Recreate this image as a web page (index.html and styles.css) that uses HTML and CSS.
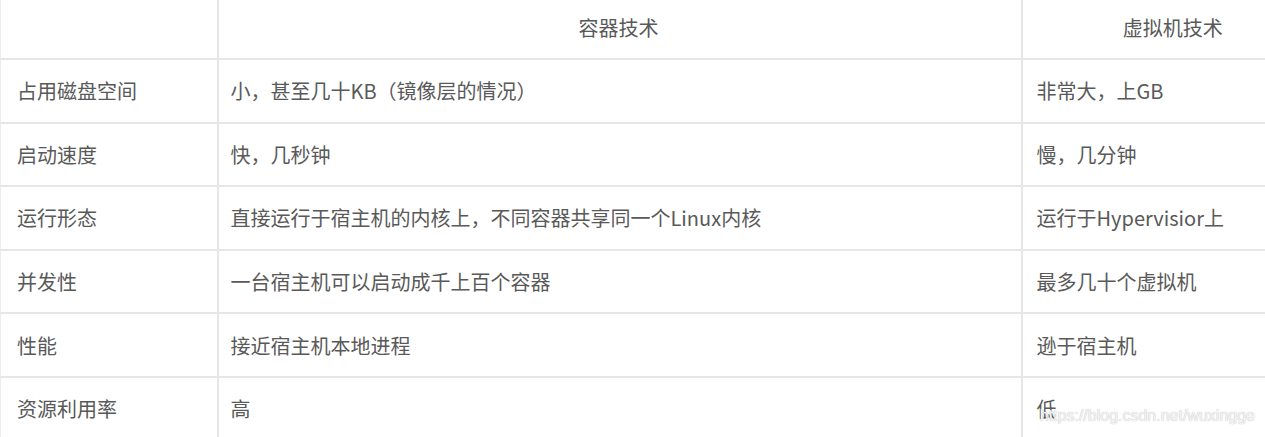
FILE: index.html
```html
<!DOCTYPE html>
<html>
<head>
    <meta charset="utf-8">
    <title>容器技术与虚拟机技术</title>
    <link rel="stylesheet" href="styles.css">
</head>
<body>
    <div class="page">
        <table class="compare">
            <colgroup>
                <col class="col-name">
                <col class="col-docker">
                <col class="col-vm">
            </colgroup>
            <thead>
                <tr>
                    <th></th>
                    <th>容器技术</th>
                    <th>虚拟机技术</th>
                </tr>
            </thead>
            <tbody>
                <tr>
                    <td>占用磁盘空间</td>
                    <td>小，甚至几十KB（镜像层的情况）</td>
                    <td>非常大，上GB</td>
                </tr>
                <tr>
                    <td>启动速度</td>
                    <td>快，几秒钟</td>
                    <td>慢，几分钟</td>
                </tr>
                <tr>
                    <td>运行形态</td>
                    <td>直接运行于宿主机的内核上，不同容器共享同一个Linux内核</td>
                    <td>运行于Hypervisior上</td>
                </tr>
                <tr>
                    <td>并发性</td>
                    <td>一台宿主机可以启动成千上百个容器</td>
                    <td>最多几十个虚拟机</td>
                </tr>
                <tr>
                    <td>性能</td>
                    <td>接近宿主机本地进程</td>
                    <td>逊于宿主机</td>
                </tr>
                <tr>
                    <td>资源利用率</td>
                    <td>高</td>
                    <td>低</td>
                </tr>
            </tbody>
        </table>
        <!-- watermark -->
        <span class="watermark">https://blog.csdn.net/wuxingge</span>
    </div>
</body>
</html>
```

FILE: styles.css
```css
/* page */
body {
    margin: 0;
    background-color: #fff;
    font-family: "Noto Sans CJK SC", "Liberation Sans", sans-serif;
    overflow: hidden;
}

.page {
    position: relative;
    width: 1265px;
    height: 437px;
    overflow: hidden;
}

/* table */
.compare {
    border-collapse: collapse;
    table-layout: fixed;
    width: 1325px;
    color: #595959;
    font-size: 20px;
}

.col-name {
    width: 217px;
}

.col-docker {
    width: 804px;
}

.compare th,
.compare td {
    border: 2px solid #e6e6e6;
    text-align: left;
    font-weight: normal;
    padding: 0 14px;
    white-space: nowrap;
}

.compare th {
    height: 54px;
    padding-bottom: 4px;
    text-align: center;
    border-top: none;
}

.compare td {
    height: 61.6px;
}

.compare tr > :first-child {
    border-left: 1px solid #ececec;
    padding-left: 16px;
}

.compare tr > :nth-child(2) {
    padding-left: 12px;
}

/* watermark over the last cell */
.watermark {
    position: absolute;
    right: 10px;
    bottom: 12px;
    font-family: "Liberation Sans", Arial, sans-serif;
    font-size: 16px;
    color: #f4f4f4;
    text-shadow: 0 0 1px #aaa;
}
```
